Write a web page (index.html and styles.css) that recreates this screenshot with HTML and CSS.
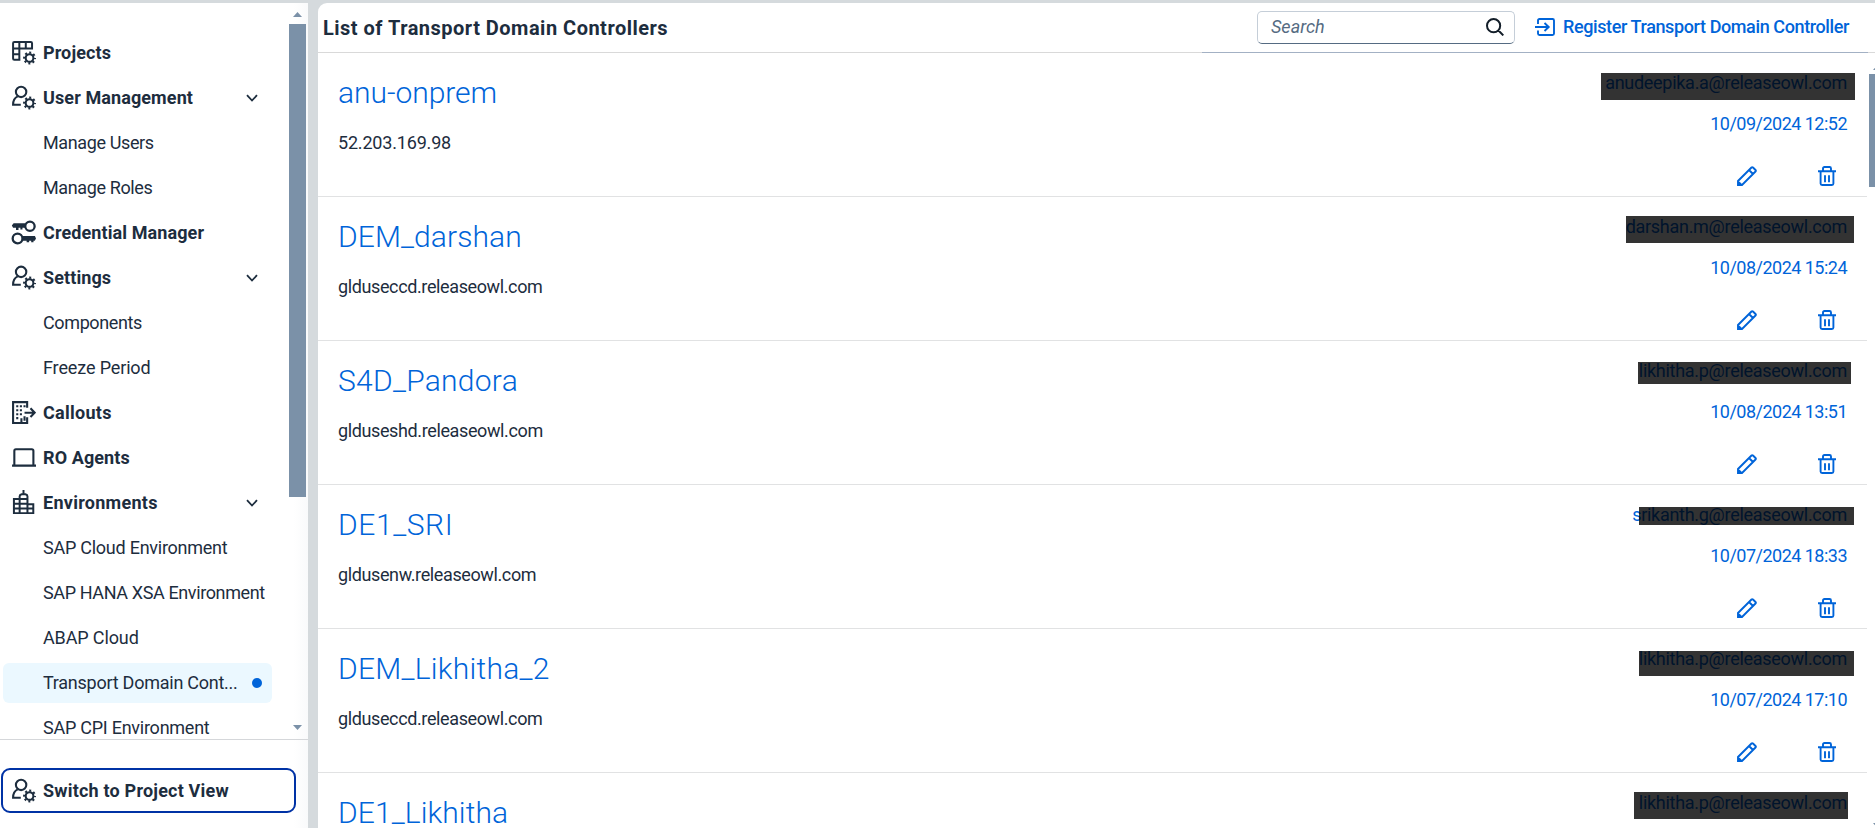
FILE: index.html
```
<!DOCTYPE html>
<html lang="en">
<head>
<meta charset="utf-8">
<title>Transport Domain Controllers</title>
<link rel="stylesheet" href="styles.css">
</head>
<body>
<svg class="sprite" aria-hidden="true">
  <symbol id="i-projects" viewBox="0 0 24 24"><g fill="none" stroke="currentColor" stroke-width="1.9"><path d="M9 19H3.2Q2 19 2 17.800V3.200Q2 2 3.200 2H19Q20.200 2 20.200 3.200V8.200H2M8 2v17M14.200 2v6.200M2 13.600h6"/><use href="#i-gear"/></g></symbol>
  <symbol id="i-gear" viewBox="0 0 24 24" overflow="visible"><circle cx="17.800" cy="17.300" r="3.700" fill="none" stroke="currentColor" stroke-width="2"/><circle cx="17.800" cy="17.300" r="5.200" fill="none" stroke="currentColor" stroke-width="2" stroke-dasharray="1.900 2.184" stroke-dashoffset=".95"/></symbol>
  <symbol id="i-user" viewBox="0 0 24 24"><g fill="none" stroke="currentColor" stroke-width="2"><circle cx="9.700" cy="6.600" r="5"/><path d="M6.500 10.900C3.500 12.200 2 15 2 18.900h7.400"/></g><use href="#i-gear"/></symbol>
  <symbol id="i-keys" viewBox="0 0 24 24"><g fill="none" stroke="currentColor" stroke-width="2.200"><circle cx="18.200" cy="6" r="4.500"/><circle cx="6.300" cy="17.700" r="4.700"/></g><path fill="currentColor" d="M2.500 3.200H14v4.300h-3V9H9V7.500H7.200v2H4.800v-2H2L.8 5.200zM11 15.300h12l1 2.500-1.200 2h-1.200v1.500h-2.200v-1.500h-2v1.500H15v-1.500h-4z"/></symbol>
  <symbol id="i-callout" viewBox="0 0 24 24"><g fill="none" stroke="currentColor" stroke-width="2"><path d="M15.500 7.500V2H2v20h13.500v-5.500M10 22v-4.500M13 12.200h9.500M18.700 8l4 4.200-4 4.200"/></g><path fill="currentColor" d="M5 5h2v2H5zM8.500 5h2v2h-2zM12 5h2v2h-2zM5 8.800h2v2H5zM8.500 8.800h2v2h-2zM5 12.600h2v2H5zM8.500 12.600h2v2h-2zM5 16.400h2v2H5zM12 15.500h2V20h-2z"/></symbol>
  <symbol id="i-laptop" viewBox="0 0 24 24"><path fill="none" stroke="currentColor" stroke-width="2" d="M3.200 19.800V5.500Q3.200 4 4.700 4H20Q21.500 4 21.500 5.500V19.800M1 19.800h23"/></symbol>
  <symbol id="i-city" viewBox="0 0 24 24"><path fill="none" stroke="currentColor" stroke-width="1.900" d="M2.800 22.200V8.700h5.500V6q0-1.500 2-2h3.500q2 .5 2 2v7.700h5.600v8.500zM8.300 8.700v13.500M15.800 13v9.200M8.300 8.700h7.500M2.800 13.200h13M2.800 17.800h18.600M12 4V0"/></symbol>
  <symbol id="i-down" viewBox="0 0 12 8"><path d="M1 1.200l5 5.300 5-5.300" fill="none" stroke="currentColor" stroke-width="1.800"/></symbol>
  <symbol id="i-search" viewBox="0 0 18 18"><path d="M12.500 12.500L17.300 17.400M14.200 7.700a6.600 6.600 0 1 1-13.200 0a6.600 6.600 0 1 1 13.200 0z" fill="none" stroke="currentColor" stroke-width="2"/></symbol>
  <symbol id="i-enter" viewBox="0 0 20 18"><path d="M3 6V2.500Q3 1 4.500 1H17.500Q19 1 19 2.500V15.500Q19 17 17.500 17H4.500Q3 17 3 15.500V12.500M0 9h13.500M9.500 5l4.200 4-4.200 4" fill="none" stroke="currentColor" stroke-width="1.900"/></symbol>
  <symbol id="i-pencil" viewBox="0 0 20 20"><path d="M1 19v-4L14.500 1.500Q15.200.8 16 1.500L18.500 4Q19.200 4.800 18.500 5.500L5 19zM12 4l4 4M1 15.500L4.500 19" fill="none" stroke="currentColor" stroke-width="1.900"/></symbol>
  <symbol id="i-trash" viewBox="0 0 18 20"><path d="M0 5.300h18M2.600 5.300V17.500Q2.600 19 4.100 19H13.900Q15.400 19 15.400 17.500V5.300M5 5V2.500Q5 1 6.500 1H11.500Q13 1 13 2.500V5M7 9.200V16.200M11 9.200V16.200" fill="none" stroke="currentColor" stroke-width="1.900"/></symbol>
</svg>
<div class="shell">
  <aside class="sidebar">
    <div class="nav-scroll">
      <nav class="nav">
        <a class="nav-item nav-group"><svg class="icon"><use href="#i-projects"/></svg><span>Projects</span></a>
        <a class="nav-item nav-group"><svg class="icon"><use href="#i-user"/></svg><span>User Management</span><svg class="chevron"><use href="#i-down"/></svg></a>
        <a class="nav-item nav-sub tight"><span>Manage Users</span></a>
        <a class="nav-item nav-sub tight"><span>Manage Roles</span></a>
        <a class="nav-item nav-group"><svg class="icon"><use href="#i-keys"/></svg><span>Credential Manager</span></a>
        <a class="nav-item nav-group"><svg class="icon"><use href="#i-user"/></svg><span>Settings</span><svg class="chevron"><use href="#i-down"/></svg></a>
        <a class="nav-item nav-sub tight"><span>Components</span></a>
        <a class="nav-item nav-sub loose"><span>Freeze Period</span></a>
        <a class="nav-item nav-group wide"><svg class="icon"><use href="#i-callout"/></svg><span>Callouts</span></a>
        <a class="nav-item nav-group"><svg class="icon"><use href="#i-laptop"/></svg><span>RO Agents</span></a>
        <a class="nav-item nav-group wide"><svg class="icon"><use href="#i-city"/></svg><span>Environments</span><svg class="chevron"><use href="#i-down"/></svg></a>
        <a class="nav-item nav-sub"><span>SAP Cloud Environment</span></a>
        <a class="nav-item nav-sub tight"><span>SAP HANA XSA Environment</span></a>
        <a class="nav-item nav-sub loose"><span>ABAP Cloud</span></a>
        <a class="nav-item nav-sub selected"><span>Transport Domain Cont...</span><i class="dot"></i></a>
        <a class="nav-item nav-sub"><span>SAP CPI Environment</span></a>
      </nav>
      <div class="scrollbar"><i class="arrow-up"></i><i class="thumb"></i><i class="arrow-down"></i></div>
    </div>
    <div class="nav-footer">
      <a class="switch nav-group"><svg class="icon"><use href="#i-user"/></svg><span>Switch to Project View</span></a>
    </div>
  </aside>
  <main class="content">
    <header class="header">
      <h1 class="heading">List of Transport Domain Controllers</h1>
      <div class="search"><span>Search</span><svg class="search-icon"><use href="#i-search"/></svg></div>
      <a class="register"><svg class="enter-icon"><use href="#i-enter"/></svg><span>Register Transport Domain Controller</span></a>
    </header>
    <div class="divider"><i class="progress"></i></div>
    <div class="list-wrap">
      <div class="list">
        <article class="row"><div class="info"><h2 class="name name-lower">anu-onprem</h2><p class="host host-ip">52.203.169.98</p></div>
          <div class="meta"><span class="email">anudeepika.a@releaseowl.com<i class="mask mask-1"></i></span><span class="date">10/09/2024 12:52</span><div class="actions"><svg class="pencil"><use href="#i-pencil"/></svg><svg class="trash"><use href="#i-trash"/></svg></div></div></article>
        <article class="row"><div class="info"><h2 class="name">DEM_darshan</h2><p class="host">glduseccd.releaseowl.com</p></div>
          <div class="meta"><span class="email">darshan.m@releaseowl.com<i class="mask mask-2"></i></span><span class="date">10/08/2024 15:24</span><div class="actions"><svg class="pencil"><use href="#i-pencil"/></svg><svg class="trash"><use href="#i-trash"/></svg></div></div></article>
        <article class="row"><div class="info"><h2 class="name name-mixed">S4D_Pandora</h2><p class="host">glduseshd.releaseowl.com</p></div>
          <div class="meta"><span class="email">likhitha.p@releaseowl.com<i class="mask mask-3"></i></span><span class="date">10/08/2024 13:51</span><div class="actions"><svg class="pencil"><use href="#i-pencil"/></svg><svg class="trash"><use href="#i-trash"/></svg></div></div></article>
        <article class="row"><div class="info"><h2 class="name name-upper">DE1_SRI</h2><p class="host">gldusenw.releaseowl.com</p></div>
          <div class="meta"><span class="email">srikanth.g@releaseowl.com<i class="mask mask-4"></i></span><span class="date">10/07/2024 18:33</span><div class="actions"><svg class="pencil"><use href="#i-pencil"/></svg><svg class="trash"><use href="#i-trash"/></svg></div></div></article>
        <article class="row"><div class="info"><h2 class="name name-mixed">DEM_Likhitha_2</h2><p class="host">glduseccd.releaseowl.com</p></div>
          <div class="meta"><span class="email">likhitha.p@releaseowl.com<i class="mask mask-5"></i></span><span class="date">10/07/2024 17:10</span><div class="actions"><svg class="pencil"><use href="#i-pencil"/></svg><svg class="trash"><use href="#i-trash"/></svg></div></div></article>
        <article class="row"><div class="info"><h2 class="name">DE1_Likhitha</h2></div>
          <div class="meta"><span class="email">likhitha.p@releaseowl.com<i class="mask mask-6"></i></span></div></article>
      </div>
      <div class="list-bar"><i class="arrow-up"></i><i class="thumb"></i><i class="arrow-down"></i></div>
    </div>
  </main>
</div>
</body>
</html>
```
FILE: styles.css
```
* { box-sizing: border-box; }
body { margin: 0; height: 828px; overflow: hidden; background: #d5dadd; color: #1d2d3e; font: 18px/24px Roboto, "Liberation Sans", sans-serif; }
h1, h2, p { margin: 0; }
svg { display: block; flex: none; }
.sprite { position: absolute; width: 0; height: 0; }
.shell { display: flex; gap: 10px; height: 828px; padding-top: 3px; }

.sidebar { display: flex; flex-direction: column; width: 308px; flex: none; background: linear-gradient(90deg, #fff 294px, #f9fafb); }
.nav-scroll { display: flex; height: 736px; overflow: hidden; }
.nav { flex: 1; padding-top: 27px; }
.nav-item { display: flex; align-items: center; height: 45px; white-space: nowrap; }
.nav-group { padding-left: 11px; font-weight: 700; letter-spacing: .1px; }
.wide { letter-spacing: .28px; }
.nav-sub { padding-left: 43px; letter-spacing: -.25px; }
.tight { letter-spacing: -.38px; }
.loose { letter-spacing: -.13px; }
.icon { width: 25px; height: 25px; margin-right: 7px; }
.chevron { width: 12px; height: 8px; margin-left: auto; margin-right: 31px; }
.selected { width: 269px; height: 40px; margin: 3px 0 2px 3px; padding-left: 40px; border-radius: 6px; background: #ebf8ff; }
.dot { width: 10px; height: 10px; margin-left: auto; margin-right: 10px; border-radius: 50%; background: #0064d9; }
.scrollbar { display: flex; flex-direction: column; align-items: center; width: 17px; margin-right: 2px; padding: 9px 0; }
.scrollbar .thumb { width: 17px; height: 473px; margin-top: 7px; background: #7b91a8; }
.arrow-up, .arrow-down { width: 9px; height: 5px; flex: none; background: #7b91a8; clip-path: polygon(50% 0, 100% 100%, 0 100%); }
.arrow-down { margin-top: auto; clip-path: polygon(0 0, 100% 0, 50% 100%); }
.nav-footer { flex: 1; padding: 28px 0 0 1px; border-top: 1px solid #d5d7da; }
.switch { display: flex; align-items: center; width: 295px; height: 45px; padding-left: 8px; border: 2px solid #0032a5; border-radius: 9px; letter-spacing: .2px; }

.content { flex: 1; min-width: 0; overflow: hidden; border-radius: 9px 0 0; background: #fff; }
.header { display: flex; align-items: center; height: 49px; padding: 0 27px 1px 5px; }
.heading { flex: 1; padding-top: 1px; font-size: 20px; line-height: 28px; letter-spacing: .49px; white-space: nowrap; }
.search { display: flex; align-items: center; justify-content: space-between; width: 258px; height: 33px; padding: 0 10px 0 13px; border: 1px solid #c5ced8; border-bottom-color: #556b82; border-radius: 5px; color: #556b82; font-style: italic; }
.search-icon { width: 18px; height: 18px; color: #131e29; }
.register { display: flex; align-items: center; gap: 8px; width: 313px; margin-left: 20px; color: #0064d9; font-weight: 500; letter-spacing: -.39px; white-space: nowrap; }
.enter-icon { width: 20px; height: 18px; }
.divider { height: 1px; background: #d9d9d9; }
.progress { display: block; width: 666px; height: 1px; margin-left: 884px; background: #a3b1c4; }
.list-wrap { display: flex; height: 775px; }
.list { width: 1549px; flex: none; overflow: hidden; }
.row { display: flex; justify-content: space-between; height: 144px; padding: 18px 20px 0; border-bottom: 1px solid #e1e2e3; white-space: nowrap; }
.name { padding-top: 7px; color: #0064d9; font-size: 30px; line-height: 30px; font-weight: 300; letter-spacing: .1px; }
.name-lower { letter-spacing: -.05px; }
.name-mixed { letter-spacing: .27px; }
.name-upper { letter-spacing: .6px; }
.host { margin-top: 23px; letter-spacing: -.38px; }
.host-ip { letter-spacing: -.18px; }
.meta { display: flex; flex-direction: column; align-items: flex-end; color: #0064d9; }
.email { position: relative; letter-spacing: -.28px; }
.date { margin-top: 17px; letter-spacing: -.52px; }
.actions { display: flex; gap: 61px; margin: 30px 11px 0 0; }
.pencil { width: 20px; height: 20px; }
.trash { width: 18px; height: 20px; }
.mask { position: absolute; background: rgba(0, 0, 0, .8); }
.mask-1 { right: -8px; top: 2px; width: 254px; height: 27px; }
.mask-2 { right: -7px; top: 1px; width: 228px; height: 27px; }
.mask-3 { right: -4px; top: 3px; width: 213px; height: 22px; }
.mask-4 { right: -7px; top: 4px; width: 215px; height: 18px; }
.mask-5 { right: -7px; top: 4px; width: 215px; height: 25px; }
.mask-6 { right: -1px; top: 1px; width: 214px; height: 27px; }
.list-bar { display: flex; flex-direction: column; width: 17px; flex: none; padding-left: 2px; padding-top: 12px; }
.list-bar .thumb { width: 15px; height: 113px; margin-top: 4px; background: #7b91a8; }
.list-bar .arrow-up, .list-bar .arrow-down { margin-left: 4px; }
```
